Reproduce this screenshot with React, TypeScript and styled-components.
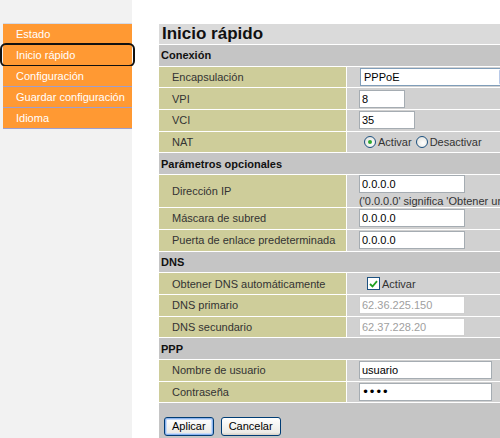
import * as React from 'react';
import styled, { createGlobalStyle } from 'styled-components';

const GlobalStyle = createGlobalStyle`
  html, body {
    margin: 0;
    padding: 0;
    background: #ffffff;
    overflow: hidden;
  }
  body {
    font-family: "Liberation Sans", Arial, sans-serif;
    font-size: 11px;
    color: #333333;
  }
`

const Page = styled.div`
  display: grid;
  grid-template-columns: 132px 27px 420px;
  width: 500px;
  height: 438px;
  overflow: hidden;
`

const Sidebar = styled.nav`
  background: #f2f2f2;
  padding-top: 23px;
`

const Menu = styled.ul`
  list-style: none;
  margin: 0 0 0 3px;
  padding: 0;
  border-top: 1px solid #d3dbe9;
`

const MenuItem = styled.li<{ $active?: boolean }>`
  position: relative;
  height: 20px;
  line-height: 20px;
  padding-left: 13px;
  background: #ff9933;
  color: #ffffff;
  border-bottom: 1px solid #9d9fd0;
  white-space: nowrap;

  &::after {
    content: '';
    display: ${p => (p.$active ? 'block' : 'none')};
    position: absolute;
    left: -3px;
    right: -3px;
    top: -2px;
    bottom: -2px;
    border: 2px solid #111111;
    border-radius: 6px;
  }
`

const Spacer = styled.div`
  background: #ffffff;
`

const Main = styled.main`
  padding-top: 24px;
`

const Title = styled.h1`
  margin: 0;
  height: 21px;
  box-sizing: border-box;
  padding-left: 3px;
  background: #dadada;
  border-bottom: 1px solid #ffffff;
  font-size: 17px;
  line-height: 20px;
  font-weight: bold;
  color: #111111;
`

const SectionHeader = styled.div`
  height: 21.7px;
  box-sizing: border-box;
  display: flex;
  align-items: center;
  padding-left: 2px;
  background: #c5c5c5;
  border-bottom: 1px solid #ffffff;
  font-weight: bold;
  color: #111111;
`

const Row = styled.div<{ $height?: number }>`
  display: grid;
  grid-template-columns: 188px 1fr;
  height: ${p => p.$height ?? 21.7}px;
  box-sizing: border-box;
  border-bottom: 1px solid #ffffff;
`

const Label = styled.div`
  display: flex;
  align-items: center;
  padding-left: 13px;
  background: #cecd9a;
  border-right: 1px solid #ffffff;
  white-space: nowrap;
`

const Value = styled.div<{ $stacked?: boolean }>`
  display: flex;
  flex-direction: ${p => (p.$stacked ? 'column' : 'row')};
  justify-content: ${p => (p.$stacked ? 'center' : 'flex-start')};
  align-items: ${p => (p.$stacked ? 'flex-start' : 'center')};
  gap: ${p => (p.$stacked ? '2px' : '0')};
  padding-left: 12px;
  background: #d1d1d1;
  white-space: nowrap;
  color: #333333;
`

const TextInput = styled.input<{ $width: number }>`
  width: ${p => p.$width}px;
  height: 18px;
  box-sizing: border-box;
  margin: 0;
  padding: 0 2px;
  border: 1px solid #a5acb2;
  background: #ffffff;
  font-family: "Liberation Sans", Arial, sans-serif;
  font-size: 11px;
  color: #000000;
  outline: none;

  &:disabled {
    border-color: #cfcfcf;
    color: #a0a0a0;
  }

  &[type='password'] {
    font-family: "DejaVu Sans", sans-serif;
    font-size: 12px;
    letter-spacing: -0.5px;
  }
`

const SelectBox = styled.div`
  display: flex;
  align-items: center;
  justify-content: space-between;
  width: 156px;
  height: 18px;
  box-sizing: border-box;
  margin-left: 1px;
  padding-left: 3px;
  border: 1px solid #7f9db9;
  background: #ffffff;
  color: #000000;
`

const SelectArrow = styled.span`
  width: 16px;
  height: 16px;
  box-sizing: border-box;
  border: 1px solid #b8c9e8;
  border-radius: 2px;
  background: linear-gradient(#e6eefc, #b9cdf3);
`

const OptionGroup = styled.label`
  display: inline-flex;
  align-items: center;
  gap: 2px;
  margin-right: 4px;
  color: #333333;

  &:first-child {
    margin-left: 5px;
  }
`

const RadioDot = styled.span<{ $checked?: boolean }>`
  position: relative;
  width: 12px;
  height: 12px;
  box-sizing: border-box;
  border-radius: 50%;
  border: 1px solid #1c5180;
  background: radial-gradient(circle at 60% 60%, #ffffff 0%, #dcdcd6 100%);

  &::after {
    content: '';
    display: ${p => (p.$checked ? 'block' : 'none')};
    position: absolute;
    left: 3px;
    top: 3px;
    width: 4px;
    height: 4px;
    border-radius: 50%;
    background: #2fa82f;
  }
`

const CheckBoxMark = styled.span`
  display: inline-flex;
  align-items: center;
  justify-content: center;
  width: 13px;
  height: 13px;
  box-sizing: border-box;
  margin-left: 3px;
  border: 1px solid #1c5180;
  background: #ffffff;
`

const Footer = styled.div`
  display: flex;
  gap: 7px;
  height: 60px;
  padding: 14px 0 0 5px;
  background: #c5c5c5;
`

const Button = styled.button<{ $default?: boolean }>`
  height: 19px;
  padding: 0 7px;
  border: 1px solid #003c74;
  border-radius: 3px;
  background: linear-gradient(#ffffff, #ecebe6 85%, #d6d0c5);
  box-shadow: ${p =>
    p.$default ? 'inset 0 0 0 1px #8cb4f0, inset 0 0 0 2px #c6daf7' : 'none'};
  font-family: "Liberation Sans", Arial, sans-serif;
  font-size: 11px;
  color: #000000;
  line-height: 15px;
`

const menuItems = ['Estado', 'Inicio rápido', 'Configuración', 'Guardar configuración', 'Idioma']

const Radio = ({ label, checked }: { label: string; checked?: boolean }) => (
  <OptionGroup>
    <RadioDot $checked={checked} />
    {label}
  </OptionGroup>
)

export default function App() {
  return (
    <>
      <GlobalStyle />
      <Page>
        <Sidebar>
          <Menu>
            {menuItems.map(item => (
              <MenuItem key={item} $active={item === 'Inicio rápido'}>
                {item}
              </MenuItem>
            ))}
          </Menu>
        </Sidebar>
        <Spacer />
        <Main>
          <Title>Inicio rápido</Title>

          <SectionHeader>Conexión</SectionHeader>
          <Row>
            <Label>Encapsulación</Label>
            <Value>
              <SelectBox>
                PPPoE
                <SelectArrow />
              </SelectBox>
            </Value>
          </Row>
          <Row>
            <Label>VPI</Label>
            <Value>
              <TextInput $width={46} defaultValue="8" />
            </Value>
          </Row>
          <Row>
            <Label>VCI</Label>
            <Value>
              <TextInput $width={56} defaultValue="35" />
            </Value>
          </Row>
          <Row>
            <Label>NAT</Label>
            <Value>
              <Radio label="Activar" checked />
              <Radio label="Desactivar" />
            </Value>
          </Row>

          <SectionHeader>Parámetros opcionales</SectionHeader>
          <Row $height={33}>
            <Label>Dirección IP</Label>
            <Value $stacked>
              <TextInput $width={106} defaultValue="0.0.0.0" />
              <span>('0.0.0.0' significa 'Obtener una dirección automáticamente')</span>
            </Value>
          </Row>
          <Row>
            <Label>Máscara de subred</Label>
            <Value>
              <TextInput $width={106} defaultValue="0.0.0.0" />
            </Value>
          </Row>
          <Row>
            <Label>Puerta de enlace predeterminada</Label>
            <Value>
              <TextInput $width={106} defaultValue="0.0.0.0" />
            </Value>
          </Row>

          <SectionHeader>DNS</SectionHeader>
          <Row>
            <Label>Obtener DNS automáticamente</Label>
            <Value>
              <OptionGroup>
                <CheckBoxMark>
                  <svg width="9" height="8" viewBox="0 0 9 8">
                    <path d="M1 4 L3.5 6.5 L8 1.2" stroke="#21a121" strokeWidth="1.8" fill="none" />
                  </svg>
                </CheckBoxMark>
                Activar
              </OptionGroup>
            </Value>
          </Row>
          <Row>
            <Label>DNS primario</Label>
            <Value>
              <TextInput $width={106} defaultValue="62.36.225.150" disabled />
            </Value>
          </Row>
          <Row>
            <Label>DNS secundario</Label>
            <Value>
              <TextInput $width={106} defaultValue="62.37.228.20" disabled />
            </Value>
          </Row>

          <SectionHeader>PPP</SectionHeader>
          <Row>
            <Label>Nombre de usuario</Label>
            <Value>
              <TextInput $width={133} defaultValue="usuario" />
            </Value>
          </Row>
          <Row>
            <Label>Contraseña</Label>
            <Value>
              <TextInput $width={133} type="password" defaultValue="1234" />
            </Value>
          </Row>

          <Footer>
            <Button $default>Aplicar</Button>
            <Button>Cancelar</Button>
          </Footer>
        </Main>
      </Page>
    </>
  )
}
